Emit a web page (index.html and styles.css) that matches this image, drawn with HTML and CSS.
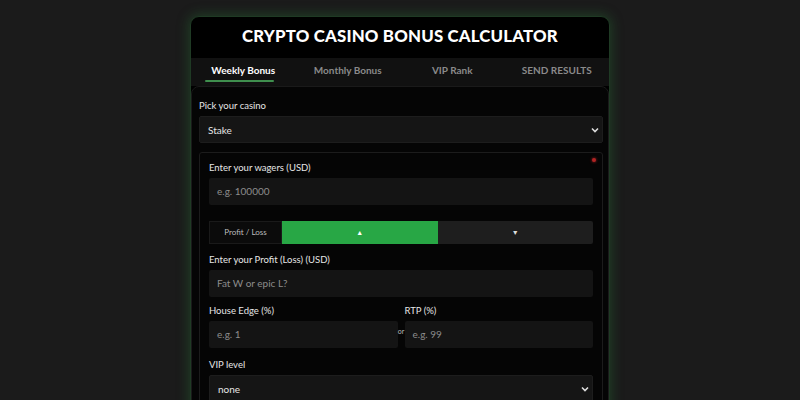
FILE: index.html
```html
<!DOCTYPE html>
<html lang="en">
<head>
<meta charset="UTF-8">
<meta name="viewport" content="width=device-width, initial-scale=1.0">
<title>Crypto Casino Bonus Calculator</title>
<link rel="stylesheet" href="styles.css">
</head>
<body>
  <div class="calc">
    <h1 class="calc-title">CRYPTO CASINO BONUS CALCULATOR</h1>

    <div class="tabs">
      <div class="tab active">Weekly Bonus</div>
      <div class="tab">Monthly Bonus</div>
      <div class="tab">VIP Rank</div>
      <div class="tab">SEND RESULTS</div>
    </div>

    <div class="panel">
      <label class="lbl">Pick your casino</label>
      <div class="select">
        <span>Stake</span>
        <svg class="chev" width="8" height="6" viewBox="0 0 8 6"><path d="M1 1.5 L4 4.5 L7 1.5" fill="none" stroke="#ddd" stroke-width="1.6"/></svg>
      </div>

      <div class="box">
        <span class="dot"></span>
        <label class="lbl">Enter your wagers (USD)</label>
        <div class="input ph">e.g. 100000</div>

        <div class="toggle">
          <div class="toggle-lbl">Profit / Loss</div>
          <div class="toggle-btn on">&#9650;</div>
          <div class="toggle-btn">&#9660;</div>
        </div>

        <label class="lbl">Enter your Profit (Loss) (USD)</label>
        <div class="input ph">Fat W or epic L?</div>

        <div class="pair">
          <div class="col">
            <label class="lbl">House Edge (%)</label>
            <div class="input ph">e.g. 1</div>
          </div>
          <span class="or">or</span>
          <div class="col">
            <label class="lbl">RTP (%)</label>
            <div class="input ph">e.g. 99</div>
          </div>
        </div>

        <label class="lbl">VIP level</label>
        <div class="select">
          <span>none</span>
          <svg class="chev" width="8" height="6" viewBox="0 0 8 6"><path d="M1 1.5 L4 4.5 L7 1.5" fill="none" stroke="#ddd" stroke-width="1.6"/></svg>
        </div>
      </div>
    </div>
  </div>
</body>
</html>
```
FILE: styles.css
```css
body {
  margin: 0;
  background: #1b1b1b;
  font-family: "Lato", "Open Sans", sans-serif;
  color: #e8e8e8;
  height: 400px;
  overflow: hidden;
}

.calc {
  width: 418px;
  margin: 16px auto 0;
  background: #000;
  border: 1px solid #1f3a24;
  border-radius: 9px;
  box-shadow: 0 0 12px 2px rgba(40, 120, 55, 0.35);
  overflow: hidden;
  height: 420px;
}

.calc-title {
  margin: 0;
  height: 41px;
  line-height: 38px;
  text-align: center;
  font-size: 16.8px;
  font-weight: 900;
  letter-spacing: 0.2px;
  color: #fff;
}

.tabs {
  display: grid;
  grid-template-columns: repeat(4, 1fr);
  background: #111;
  height: 28px;
}

.tab {
  position: relative;
  text-align: center;
  font-size: 10px;
  font-weight: 700;
  line-height: 25px;
  color: #8a8a8a;
}

.tab.active {
  color: #fff;
}

.tab.active::after {
  content: "";
  position: absolute;
  left: 14px;
  right: 22px;
  bottom: 4px;
  height: 2px;
  background: #3f8f4e;
  border-radius: 1px;
}

.panel {
  background: #050505;
  border: 1px solid #1a1a1a;
  border-radius: 8px 8px 0 0;
  padding: 13px 5px 0 7px;
  height: 330px;
}

.lbl {
  display: block;
  font-size: 9.5px;
  color: #e6e6e6;
  margin-bottom: 5px;
}

.select {
  display: flex;
  align-items: center;
  justify-content: space-between;
  height: 27px;
  background: #151515;
  border: 1px solid #1d1d1d;
  border-radius: 2px;
  padding: 0 3px 0 8px;
  font-size: 10px;
  color: #e6e6e6;
  box-sizing: border-box;
}

.panel > .select {
  margin-bottom: 9px;
}

.box {
  position: relative;
  border: 1px solid #1c1c1c;
  border-radius: 3px;
  padding: 9px 9px 0 9px;
  height: 260px;
}

.dot {
  position: absolute;
  top: 5px;
  right: 6px;
  width: 4px;
  height: 4px;
  border-radius: 50%;
  background: #b22424;
  box-shadow: 0 0 3px #b22424;
}

.input {
  height: 27px;
  line-height: 27px;
  background: #141414;
  border-radius: 2px;
  padding: 0 8px;
  font-size: 10px;
}

.ph {
  color: #8c8c8c;
}

.box > .input {
  margin-bottom: 16px;
}

.toggle {
  display: flex;
  height: 23px;
  background: #1e1e1e;
  border-radius: 2px;
  margin: 0 0 10px;
  font-size: 8px;
}

.toggle-lbl {
  width: 73px;
  background: #0b0b0b;
  border: 1px solid #1a1a1a;
  box-sizing: border-box;
  color: #bdbdbd;
  text-align: center;
  line-height: 21px;
}

.toggle-btn {
  flex: 1;
  text-align: center;
  line-height: 23px;
  color: #ddd;
  font-size: 7px;
}

.toggle-btn.on {
  background: #28a745;
  color: #fff;
}

.pair {
  display: flex;
  align-items: flex-start;
  margin: -8px 0 11px;
}

.col {
  flex: 1;
}

.pair .input {
  margin: 0;
}

.or {
  width: 7px;
  padding-top: 22px;
  font-size: 7px;
  color: #bbb;
  text-align: center;
}

.chev {
  display: block;
}
```
